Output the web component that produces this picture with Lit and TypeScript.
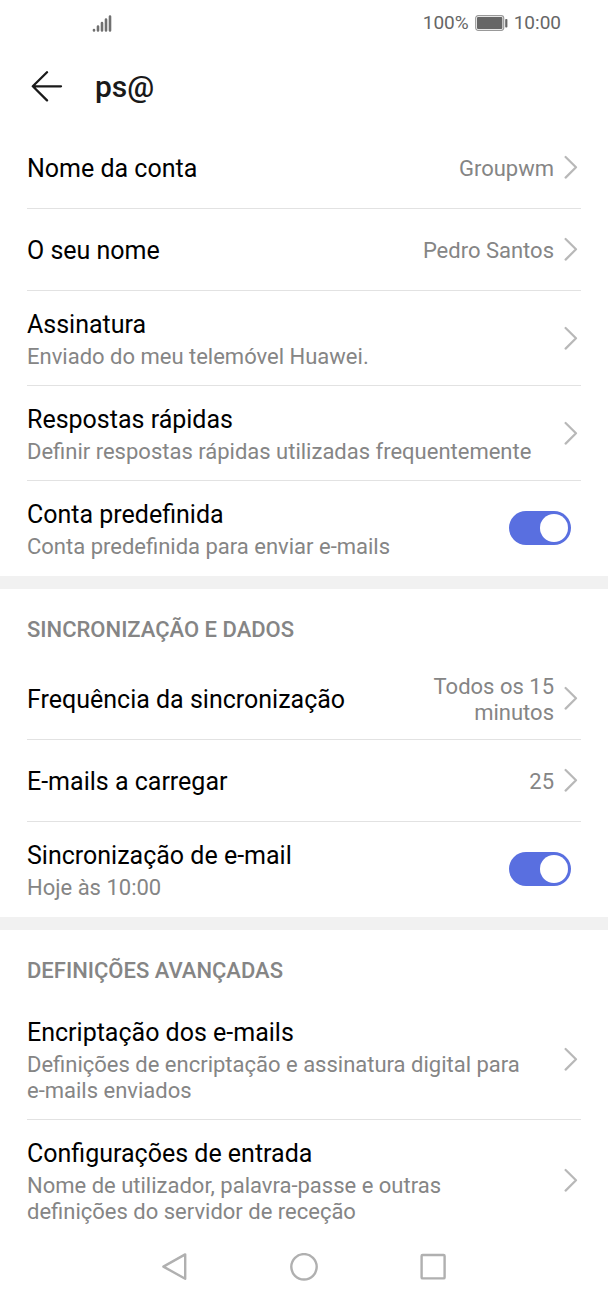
import { LitElement, html, css, nothing } from "lit";
import { customElement, property } from "lit/decorators.js";

@customElement("settings-row")
class SettingsRow extends LitElement {
  static styles = css`
    :host { display: block; }
    * { box-sizing: border-box; }
    .row {
      display: flex; align-items: center; width: 100%; min-height: 82px;
      padding: 0 0 1px; border: 0; border-bottom: 1px solid #e2e2e2;
      background: none; color: #000; text-align: left; font: inherit;
    }
    .row.tall { min-height: 95px; }
    .row.last { border-bottom-color: transparent; }
    .text { flex: 1; min-width: 0; padding: 18px 0 14px; }
    .title { display: block; font-size: 25px; line-height: 32px; }
    .sub { display: block; font-size: 22px; line-height: 26px; color: #858585; padding-top: 3px; padding-right: 18px; }
    .value { max-width: 140px; padding-top: 4px; font-size: 22px; line-height: 26px; color: #858585; text-align: right; }
    .chevron { flex: none; width: 15px; height: 24px; margin: 0 3px 0 9px; }
    .switch {
      appearance: none; flex: none; width: 62px; height: 34px; margin: 0 10px 0 0;
      border-radius: 17px; background: #596fe0; position: relative;
    }
    .switch::before {
      content: ""; position: absolute; top: 3px; right: 3px; width: 28px; height: 28px;
      border-radius: 50%; background: #fff;
    }
    .switch:not(:checked) { background: #ccc; }
    .switch:not(:checked)::before { right: auto; left: 3px; }
  `;
  @property() heading = "";
  @property() sub = "";
  @property() value = "";
  @property({ type: Boolean }) toggle = false;
  @property({ type: Boolean }) last = false;

  render() {
    const cls = `row ${this.sub ? "tall" : ""} ${this.last ? "last" : ""}`;
    const text = html`<span class="text"><span class="title">${this.heading}</span>${this.sub ? html`<span class="sub">${this.sub}</span>` : nothing}</span>`;
    if (this.toggle) {
      return html`<label class=${cls}>${text}<input class="switch" type="checkbox" role="switch" checked /></label>`;
    }
    return html`<button class=${cls}>${text}
      ${this.value ? html`<span class="value">${this.value}</span>` : nothing}
      <svg class="chevron" viewBox="0 0 15 24" fill="none" stroke="#b8b8b8" stroke-width="2.2" stroke-linecap="round" stroke-linejoin="round" aria-hidden="true"><path d="M2.6 2 13 12.3 2.6 22.6" /></svg>
    </button>`;
  }
}

@customElement("app-root")
class AppRoot extends LitElement {
  static styles = css`
    :host { display: flex; flex-direction: column; min-height: 100vh; background: #fff; font-family: Roboto, sans-serif; color: #000; }
    * { box-sizing: border-box; }
    .status { display: flex; align-items: center; height: 46px; padding: 0 47px 0 92px; font-size: 19px; line-height: 24px; color: #666; }
    .battery { margin: 0 6px; }
    .signal { margin-right: auto; }
    header { display: flex; align-items: center; height: 81px; padding: 0 30px; gap: 32px; }
    .back { display: flex; border: 0; padding: 0; background: none; }
    h1 { margin: 0; font-size: 30px; line-height: 36px; font-weight: 500; color: #1a1a1a; }
    section { padding: 0 27px; }
    section + section { border-top: 13px solid #f1f1f1; }
    h2 { margin: 0; padding-top: 28px; height: 69px; font-size: 22px; line-height: 26px; font-weight: 500; color: #858585; }
    nav { display: flex; justify-content: center; gap: 100px; padding: 12px 0 21px; margin-top: auto; }
    .key { display: flex; border: 0; padding: 0; background: none; }
  `;
  render() {
    return html`
      <div class="status">
        <svg class="signal" width="20" height="18" stroke="#707070" stroke-width="2.6" stroke-linecap="round" aria-hidden="true">
          <path d="M2 16v.5M6 12.5v4M10 9v7.5M14 5.5v11M18 2.5v14" />
        </svg>
        <span>100%</span>
        <svg class="battery" width="33" height="16" aria-hidden="true">
          <rect x=".7" y=".7" width="28" height="14.6" rx="2.5" fill="none" stroke="#999" stroke-width="1.2" />
          <rect x="2" y="2" width="25.4" height="12" rx="1" fill="#666" /><rect x="30.2" y="4" width="2.2" height="8.5" rx=".8" fill="#666" />
        </svg>
        <span>10:00</span>
      </div>
      <header>
        <button class="back" aria-label="Voltar">
          <svg width="33" height="32" fill="none" stroke="#1a1a1a" stroke-width="2.3" stroke-linecap="round" stroke-linejoin="round"><path d="M17 1.2 2.8 15.3 17 29.4M2.8 15.3H31" /></svg>
        </button>
        <h1>ps@</h1>
      </header>
      <section>
        <settings-row heading="Nome da conta" value="Groupwm"></settings-row>
        <settings-row heading="O seu nome" value="Pedro Santos"></settings-row>
        <settings-row heading="Assinatura" sub="Enviado do meu telemóvel Huawei."></settings-row>
        <settings-row heading="Respostas rápidas" sub="Definir respostas rápidas utilizadas frequentemente"></settings-row>
        <settings-row heading="Conta predefinida" sub="Conta predefinida para enviar e-mails" toggle last></settings-row>
      </section>
      <section>
        <h2>SINCRONIZAÇÃO E DADOS</h2>
        <settings-row heading="Frequência da sincronização" value="Todos os 15 minutos"></settings-row>
        <settings-row heading="E-mails a carregar" value="25"></settings-row>
        <settings-row heading="Sincronização de e-mail" sub="Hoje às 10:00" toggle last></settings-row>
      </section>
      <section>
        <h2>DEFINIÇÕES AVANÇADAS</h2>
        <settings-row heading="Encriptação dos e-mails" sub="Definições de encriptação e assinatura digital para e-mails enviados"></settings-row>
        <settings-row heading="Configurações de entrada" sub="Nome de utilizador, palavra-passe e outras definições do servidor de receção" last></settings-row>
      </section>
      <nav>
        <button class="key" aria-label="Anterior"><svg width="29" height="28" fill="none" stroke="#b0b0b0" stroke-width="2.4" stroke-linejoin="round"><path d="M24.2 1.4v24.4L2.4 13.6z" /></svg></button>
        <button class="key" aria-label="Início"><svg width="29" height="28" fill="none" stroke="#b0b0b0" stroke-width="2.4"><circle cx="14" cy="13.8" r="12.7" /></svg></button>
        <button class="key" aria-label="Recentes"><svg width="29" height="28" fill="none" stroke="#b0b0b0" stroke-width="2.4"><rect x="2.6" y="2" width="23" height="23.4" rx="1" /></svg></button>
      </nav>
    `;
  }
}
